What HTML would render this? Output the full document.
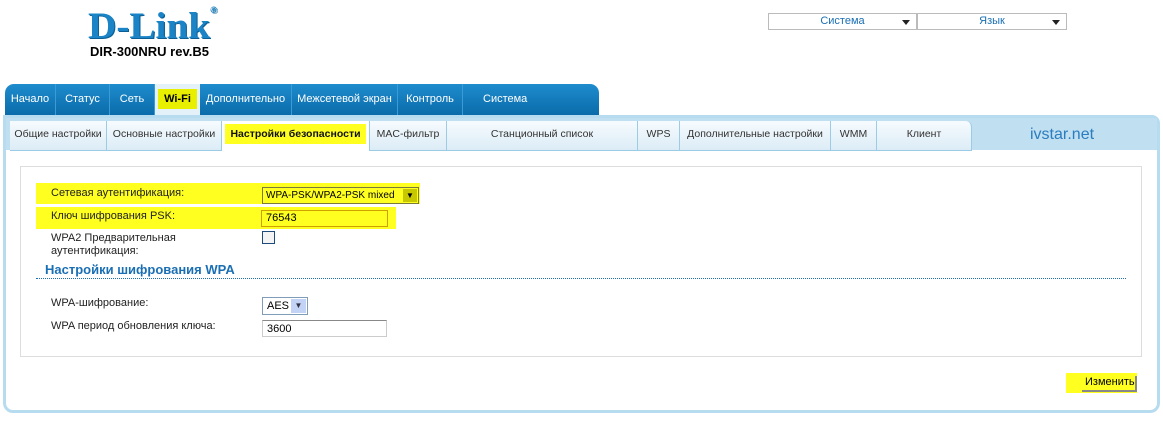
<!DOCTYPE html>
<html><head><meta charset="utf-8"><style>
*{box-sizing:border-box;margin:0;padding:0}
body{width:1163px;height:421px;background:#fff;font-family:"Liberation Sans",sans-serif;font-size:11px;color:#222;position:relative;overflow:hidden}
.a{position:absolute}
.logo{left:88px;top:5px;font:bold 37px "Liberation Serif",serif;color:#1a84c6;letter-spacing:0px;text-shadow:1px 1px 0 #0b5f94;transform:scaleX(1.06);transform-origin:left}
.model{left:90px;top:44px;font-size:13px;font-weight:bold;color:#000}
.dd{top:13px;height:17px;border:1px solid #bbb;color:#1a6fb4;font-size:11px;text-align:center;line-height:15px}
.dd:after{content:"";position:absolute;right:6px;top:6px;border:4px solid transparent;border-top:5px solid #222}
.mt{top:84px;height:32px;left:5px;width:594px;background:linear-gradient(#1e8ccd,#0a6aa9);border-radius:9px 9px 0 0}
.mtab{position:absolute;top:84px;height:32px;line-height:30px;color:#fff;font-size:11px;text-align:center;border-right:1px solid #3a9bd6}
.panel{left:3px;top:115px;width:1157px;height:298px;border:3px solid #b7dcef;border-radius:0 8px 10px 10px;background:#fff}
.sb{left:6px;top:118px;width:1151px;height:32px;background:#c0dff0}
.st{position:absolute;top:121px;height:30px;line-height:27px;text-align:center;background:linear-gradient(#f6fbfe,#dcecf6);border-right:1px solid #9ccbe6;border-bottom:1px solid #9ccbe6;font-size:10.5px;color:#333}
.box{left:20px;top:166px;width:1122px;height:191px;border:1px solid #ddd}
.hl{background:#ffff20}
.lbl{font-size:11px;color:#222}
</style></head><body>
<div class="a logo">D-Link<span style="font-size:9px;vertical-align:top">®</span></div>
<div class="a model">DIR-300NRU rev.B5</div>
<div class="a dd" style="left:768px;width:149px">Система</div>
<div class="a dd" style="left:917px;width:150px">Язык</div>

<div class="a mt"></div>
<div class="mtab" style="left:5px;width:51px">Начало</div>
<div class="mtab" style="left:56px;width:54px">Статус</div>
<div class="mtab" style="left:110px;width:45px">Сеть</div>
<div class="mtab" style="left:155px;width:45px;background:#e4f1f9;color:#000;font-weight:bold;border:none"><span class="hl" style="padding:4px 6px;background:#e8f000">Wi-Fi</span></div>
<div class="mtab" style="left:200px;width:92px">Дополнительно</div>
<div class="mtab" style="left:292px;width:106px">Межсетевой экран</div>
<div class="mtab" style="left:398px;width:65px">Контроль</div>
<div class="mtab" style="left:463px;width:136px;border:none;text-align:left;padding-left:20px">Система</div>

<div class="a panel"></div>
<div class="a sb"></div>
<div class="st" style="left:10px;width:97px">Общие настройки</div>
<div class="st" style="left:107px;width:115px">Основные настройки</div>
<div class="st" style="left:222px;width:148px;background:#fff;border-bottom:none;font-weight:bold;color:#111"><span class="hl" style="padding:4px 5px">Настройки безопасности</span></div>
<div class="st" style="left:370px;width:77px">MAC-фильтр</div>
<div class="st" style="left:447px;width:191px">Станционный список</div>
<div class="st" style="left:638px;width:42px">WPS</div>
<div class="st" style="left:680px;width:151px">Дополнительные настройки</div>
<div class="st" style="left:831px;width:46px">WMM</div>
<div class="st" style="left:877px;width:95px;border-radius:0 6px 0 0">Клиент</div>
<div class="a" style="left:1030px;top:126px;font-size:16px;color:#2a7dbf">ivstar.net</div>

<div class="a box"></div>
<div class="a hl" style="left:36px;top:183px;width:384px;height:21px"></div>
<div class="a hl" style="left:36px;top:207px;width:360px;height:22px"></div>
<div class="a lbl" style="left:51px;top:187px">Сетевая аутентификация:</div>
<div class="a lbl" style="left:51px;top:210px">Ключ шифрования PSK:</div>
<div class="a lbl" style="left:51px;top:232px;line-height:13px">WPA2 Предварительная<br>аутентификация:</div>
<div class="a" style="left:262px;top:187px;width:157px;height:17px;border:1px solid #7a7a3a;font-size:10px;padding:2px 3px;color:#000;overflow:hidden;white-space:nowrap">WPA-PSK/WPA2-PSK mixed<span style="position:absolute;right:1px;top:1px;width:14px;height:13px;background:#c8c800;font-size:8px;text-align:center;line-height:13px">▼</span></div>
<div class="a" style="left:261px;top:210px;width:127px;height:17px;border:1px solid #d0a000;font-size:11px;padding:1px 4px;color:#000">76543</div>
<div class="a" style="left:262px;top:231px;width:13px;height:13px;border:1px solid #1c4c7c;background:#f4f4f4"></div>
<div class="a" style="left:45px;top:262px;font-size:13px;font-weight:bold;color:#1a6fb4">Настройки шифрования WPA</div>
<div class="a" style="left:36px;top:278px;width:1090px;border-top:1px dotted #1a6fb4"></div>
<div class="a lbl" style="left:51px;top:297px">WPA-шифрование:</div>
<div class="a lbl" style="left:51px;top:320px">WPA период обновления ключа:</div>
<div class="a" style="left:262px;top:297px;width:46px;height:18px;border:1px solid #7f9db9;font-size:11px;padding:2px 4px;color:#000">AES<span style="position:absolute;right:1px;top:1px;width:15px;height:14px;background:#c2d3f6;font-size:8px;text-align:center;line-height:14px;color:#334">▼</span></div>
<div class="a" style="left:262px;top:320px;width:125px;height:17px;border:1px solid #ccc;border-top-color:#888;font-size:11px;padding:2px 4px;color:#000">3600</div>

<div class="a hl" style="left:1066px;top:373px;width:71px;height:20px"></div>
<div class="a" style="left:1082px;top:376px;width:55px;height:16px;border-right:2px solid #888;border-bottom:2px solid #888;font-size:11px;color:#000;padding-left:3px">Изменить</div>
</body></html>
